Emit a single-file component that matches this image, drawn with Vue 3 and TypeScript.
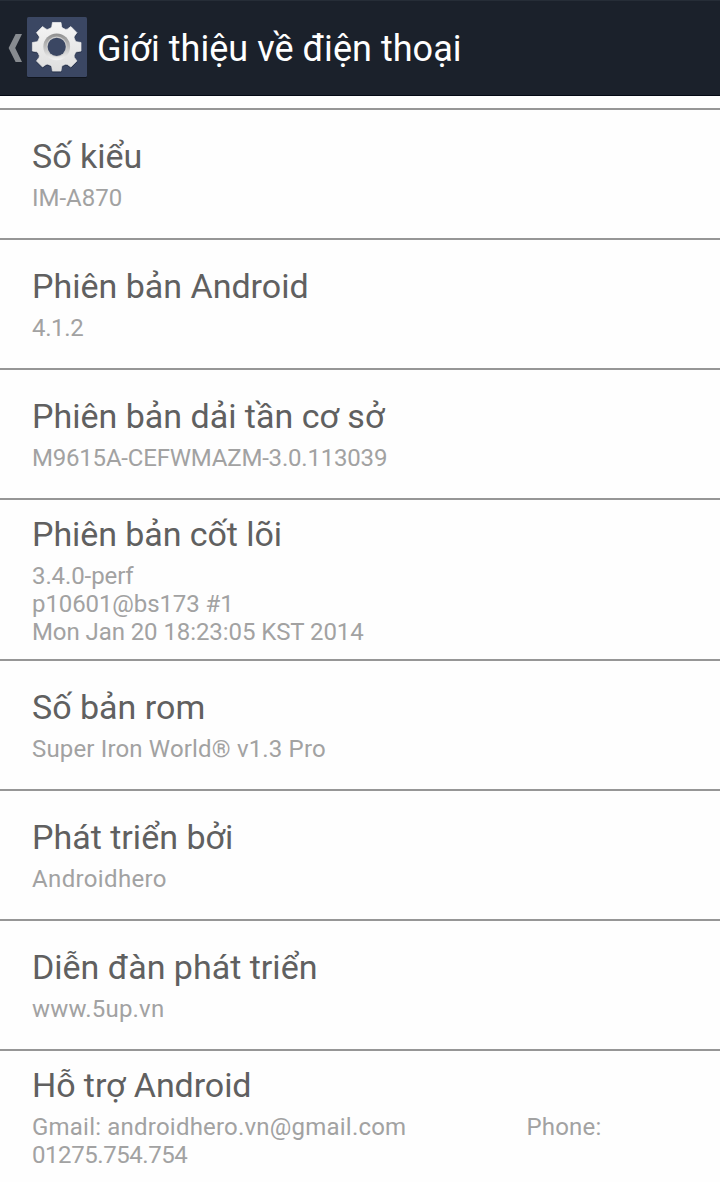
<script setup lang="ts">
interface InfoLine {
  text: string
  tracking: number
}

interface InfoItem {
  title: string
  lines: InfoLine[]
  extra?: string
}

const items: InfoItem[] = [
  { title: 'Số kiểu', lines: [{ text: 'IM-A870', tracking: 0 }] },
  { title: 'Phiên bản Android', lines: [{ text: '4.1.2', tracking: -0.35 }] },
  { title: 'Phiên bản dải tần cơ sở', lines: [{ text: 'M9615A-CEFWMAZM-3.0.113039', tracking: -0.2 }] },
  {
    title: 'Phiên bản cốt lõi',
    lines: [
      { text: '3.4.0-perf', tracking: -0.1 },
      { text: 'p10601@bs173 #1', tracking: -0.1 },
      { text: 'Mon Jan 20 18:23:05 KST 2014', tracking: -0.08 },
    ],
  },
  { title: 'Số bản rom', lines: [{ text: 'Super Iron World® v1.3 Pro', tracking: 0.16 }] },
  { title: 'Phát triển bởi', lines: [{ text: 'Androidhero', tracking: 0.36 }] },
  { title: 'Diễn đàn phát triển', lines: [{ text: 'www.5up.vn', tracking: 0.2 }] },
  {
    title: 'Hỗ trợ Android',
    lines: [
      { text: 'Gmail: androidhero.vn@gmail.com', tracking: 0.21 },
      { text: '01275.754.754', tracking: -0.44 },
    ],
    extra: 'Phone:',
  },
]

function gearPath(cx: number, cy: number): string {
  const points: string[] = []
  for (let i = 0; i < 8; i++) {
    const mid = i * 45 - 90
    const corners: [number, number][] = [[-17.5, 19.6], [-14, 20.6], [-10, 24.7], [10, 24.7], [14, 20.6], [17.5, 19.6]]
    for (const [offset, radius] of corners) {
      const a = ((mid + offset) * Math.PI) / 180
      points.push(`${(cx + radius * Math.cos(a)).toFixed(2)} ${(cy + radius * Math.sin(a)).toFixed(2)}`)
    }
  }
  return `M${points.join('L')}Z`
}

const gear = gearPath(29.7, 29.8)
</script>

<template>
  <div class="screen">
    <header class="bar">
      <svg class="back" width="15" height="30" viewBox="0 0 15 30">
        <path d="M7.6 1H14L7.2 15L14 29H7.6L.6 15Z" fill="#878b90" />
      </svg>
      <svg class="icon" width="60" height="61" viewBox="0 0 60 61">
        <defs>
          <linearGradient id="metal" x1="0" y1="0" x2="0" y2="1">
            <stop offset="0" stop-color="#f5f5f5" />
            <stop offset="1" stop-color="#dedede" />
          </linearGradient>
          <linearGradient id="bevel" x1="0" y1="0" x2="0" y2="1">
            <stop offset="0" stop-color="#8f8f8f" />
            <stop offset="0.5" stop-color="#bebebe" />
            <stop offset="1" stop-color="#f4f4f4" />
          </linearGradient>
        </defs>
        <rect y="1" width="60" height="60" rx="1.5" fill="#10151e" />
        <rect width="60" height="60" rx="1.5" fill="#3b4763" />
        <path :d="gear" transform="translate(0 1)" fill="#222c42" stroke="#222c42" stroke-linejoin="round" opacity="0.6" />
        <path :d="gear" fill="url(#metal)" stroke="url(#metal)" stroke-width="0.7" stroke-linejoin="round" />
        <circle cx="29.7" cy="29.8" r="13.4" fill="url(#bevel)" />
        <circle cx="29.7" cy="29.8" r="10.2" fill="#cdcdcd" />
        <circle cx="29.7" cy="29.8" r="9.1" fill="#3b4763" />
      </svg>
      <h1 class="heading">Giới thiệu về điện thoại</h1>
    </header>
    <main class="list">
      <section v-for="item in items" :key="item.title" class="row" :class="{ tall: item.lines.length > 1 }">
        <h2 class="title">{{ item.title }}</h2>
        <div class="summary">
          <div
            v-for="(line, i) in item.lines"
            :key="line.text"
            class="line"
            :style="{ letterSpacing: `${line.tracking}px` }"
          >
            <span>{{ line.text }}</span>
            <span v-if="item.extra && i === 0" class="extra">{{ item.extra }}</span>
          </div>
        </div>
      </section>
    </main>
  </div>
</template>

<style>
body {
  margin: 0;
  background: #fefefe;
}
</style>

<style scoped>
.screen {
  width: 720px;
  height: 1182px;
  overflow: hidden;
  background: #fefefe;
  font-family: Roboto, "Noto Sans", sans-serif;
}
.bar {
  box-sizing: border-box;
  height: 96px;
  display: flex;
  align-items: flex-start;
  padding-left: 8px;
  background: #1b212b;
  border-top: 1px solid #262d37;
  border-bottom: 1px solid #040914;
}
.back {
  margin-top: 32px;
}
.icon {
  margin: 16px 0 0 4px;
}
.heading {
  margin: 26px 0 0 10px;
  font-size: 36px;
  line-height: 44px;
  font-weight: 400;
  letter-spacing: 0.04px;
  color: #fff;
  white-space: nowrap;
}
.list {
  padding-top: 12px;
}
.row {
  box-sizing: border-box;
  height: 130px;
  padding: 26px 32px 0;
  border-top: 2px solid #969696;
}
.row.tall {
  height: 161px;
  padding-top: 14px;
}
.title {
  margin: 0 0 8px;
  font-size: 34px;
  line-height: 40px;
  font-weight: 400;
  color: #606060;
  white-space: nowrap;
}
.tall .title {
  letter-spacing: -0.07px;
}
.summary {
  font-size: 24px;
  line-height: 28px;
  color: #a2a2a2;
}
.line {
  display: flex;
  white-space: nowrap;
}
.extra {
  margin-left: 120px;
}
</style>
